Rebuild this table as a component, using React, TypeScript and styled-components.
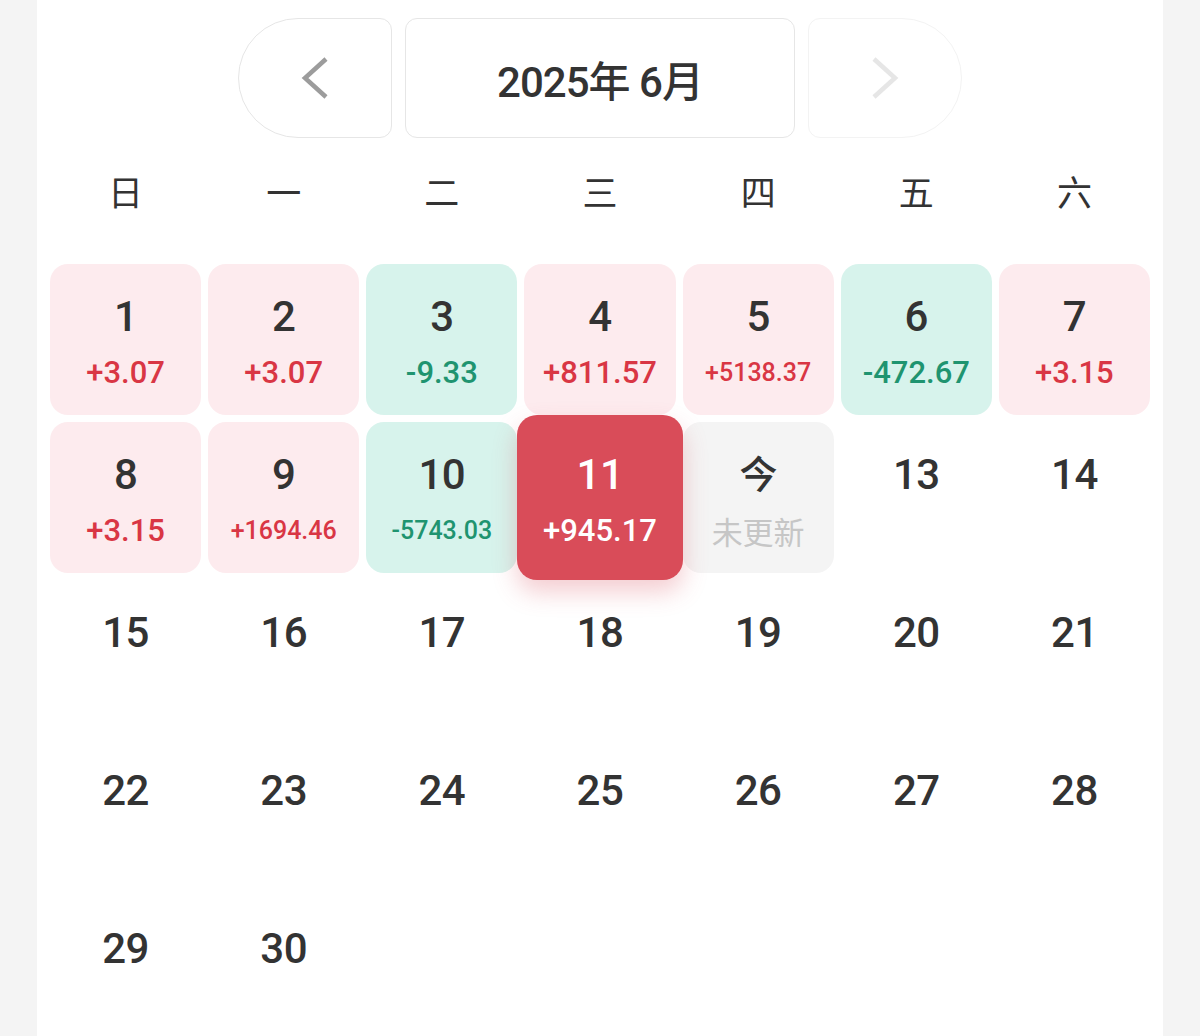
import React from "react";
import styled, { createGlobalStyle, css } from "styled-components";

type Trend = "up" | "down" | "none";

interface DayData {
  day: number;
  value?: string;
  trend?: Trend;
  selected?: boolean;
  today?: boolean;
}

const WEEKDAYS = ["日", "一", "二", "三", "四", "五", "六"];

const RECORDS: Record<number, { value: string; trend: Trend }> = {
  1: { value: "+3.07", trend: "up" },
  2: { value: "+3.07", trend: "up" },
  3: { value: "-9.33", trend: "down" },
  4: { value: "+811.57", trend: "up" },
  5: { value: "+5138.37", trend: "up" },
  6: { value: "-472.67", trend: "down" },
  7: { value: "+3.15", trend: "up" },
  8: { value: "+3.15", trend: "up" },
  9: { value: "+1694.46", trend: "up" },
  10: { value: "-5743.03", trend: "down" },
  11: { value: "+945.17", trend: "up" },
};

const SELECTED_DAY = 11;
const TODAY = 12;

const days: DayData[] = Array.from({ length: 30 }, (_, i) => {
  const day = i + 1;
  const rec = RECORDS[day];
  return {
    day,
    value: rec?.value,
    trend: rec?.trend ?? "none",
    selected: day === SELECTED_DAY,
    today: day === TODAY,
  };
});

const GlobalStyle = createGlobalStyle`
  html, body {
    margin: 0;
    padding: 0;
    background: #f4f4f4;
  }
  body {
    font-family: Roboto, "Noto Sans CJK SC", sans-serif;
    color: #333333;
  }
`;

const ChevronIcon = ({ dir, color }: { dir: "left" | "right"; color: string }) => (
  <svg width="28" height="42" viewBox="0 0 28 42" fill="none">
    <polyline
      points={dir === "left" ? "25,2 4,21 25,40" : "3,2 24,21 3,40"}
      stroke={color}
      strokeWidth="4.5"
      strokeLinejoin="miter"
    />
  </svg>
);

export default function App() {
  return (
    <>
      <GlobalStyle />
      <Panel>
        <MonthBar>
          <NavButton $side="left">
            <ChevronIcon dir="left" color="#9c9c9c" />
          </NavButton>
          <MonthTitle>2025年 6月</MonthTitle>
          <NavButton $side="right" $disabled>
            <ChevronIcon dir="right" color="#e6e6e6" />
          </NavButton>
        </MonthBar>

        <WeekRow>
          {WEEKDAYS.map((w) => (
            <WeekLabel key={w}>{w}</WeekLabel>
          ))}
        </WeekRow>

        <DayGrid>
          {days.map((d) => {
            const tone: Trend | "selected" | "today" = d.selected
              ? "selected"
              : d.today
              ? "today"
              : d.trend ?? "none";
            return (
              <DayCell key={d.day} $tone={tone}>
                <DayNumber $tone={tone}>{d.today ? "今" : d.day}</DayNumber>
                {d.today && <DayNote>未更新</DayNote>}
                {d.value && (
                  <DayValue $tone={tone} $long={d.value.length >= 8}>
                    {d.value}
                  </DayValue>
                )}
              </DayCell>
            );
          })}
        </DayGrid>
      </Panel>
    </>
  );
}

const Panel = styled.main`
  width: 1126px;
  margin: 0 auto;
  box-sizing: border-box;
  background: #ffffff;
  padding: 18px 13px 40px;
  min-height: 1036px;
`;

const MonthBar = styled.header`
  display: flex;
  justify-content: center;
  gap: 13px;
`;

const NavButton = styled.button<{ $side: "left" | "right"; $disabled?: boolean }>`
  width: 154px;
  height: 120px;
  box-sizing: border-box;
  background: #ffffff;
  border: 1px solid ${(p) => (p.$disabled ? "#f3f3f3" : "#e6e6e6")};
  display: flex;
  align-items: center;
  justify-content: center;
  padding: 0;
  cursor: pointer;
  ${(p) =>
    p.$side === "left"
      ? css`
          border-radius: 60px 12px 12px 60px;
        `
      : css`
          border-radius: 12px 60px 60px 12px;
        `}
`;

const MonthTitle = styled.div`
  width: 390px;
  height: 120px;
  box-sizing: border-box;
  border: 1px solid #e6e6e6;
  border-radius: 12px;
  display: flex;
  align-items: center;
  justify-content: center;
  font-family: Roboto, "Noto Sans CJK SC", sans-serif;
  font-size: 42px;
  font-weight: 500;
  letter-spacing: -1px;
  color: #333333;
`;

const WeekRow = styled.div`
  display: grid;
  grid-template-columns: repeat(7, 1fr);
  gap: 7px;
  margin-top: 17px;
  height: 70px;
  align-items: center;
`;

const WeekLabel = styled.div`
  text-align: center;
  font-family: "Noto Sans CJK SC", sans-serif;
  font-size: 35px;
  font-weight: 400;
  color: #333333;
`;

const DayGrid = styled.section`
  display: grid;
  grid-template-columns: repeat(7, 1fr);
  grid-auto-rows: 151px;
  gap: 7px;
  margin-top: 39px;
`;

const toneBg: Record<string, string> = {
  up: "#fdebee",
  down: "#d7f3ec",
  today: "#f4f4f4",
  selected: "#d94c59",
  none: "transparent",
};

const DayCell = styled.div<{ $tone: string }>`
  position: relative;
  box-sizing: border-box;
  border-radius: 18px;
  background: ${(p) => toneBg[p.$tone]};
  display: flex;
  flex-direction: column;
  align-items: center;
  padding-top: 29px;
  ${(p) =>
    p.$tone === "selected" &&
    css`
      margin: -7px;
      padding-top: 36px;
      border-radius: 20px;
      z-index: 1;
      box-shadow: 0 12px 24px rgba(217, 76, 89, 0.28);
    `}
`;

const DayNumber = styled.div<{ $tone: string }>`
  height: 48px;
  line-height: 48px;
  font-family: Roboto, "Noto Sans CJK SC", sans-serif;
  font-size: ${(p) => (p.$tone === "today" ? "38px" : "42px")};
  font-weight: 500;
  letter-spacing: -0.5px;
  color: ${(p) => (p.$tone === "selected" ? "#ffffff" : "#333333")};
`;

const valueColor: Record<string, string> = {
  up: "#d93644",
  down: "#1f9470",
  selected: "#ffffff",
};

const DayValue = styled.div<{ $tone: string; $long: boolean }>`
  margin-top: 12px;
  height: 40px;
  line-height: 40px;
  font-family: Roboto, sans-serif;
  font-size: ${(p) => (p.$long ? "25px" : "31px")};
  font-weight: 500;
  color: ${(p) => valueColor[p.$tone] ?? "#333333"};
`;

const DayNote = styled.div`
  margin-top: 12px;
  height: 40px;
  line-height: 40px;
  font-family: "Noto Sans CJK SC", sans-serif;
  font-size: 31px;
  color: #c6c6c6;
`;
